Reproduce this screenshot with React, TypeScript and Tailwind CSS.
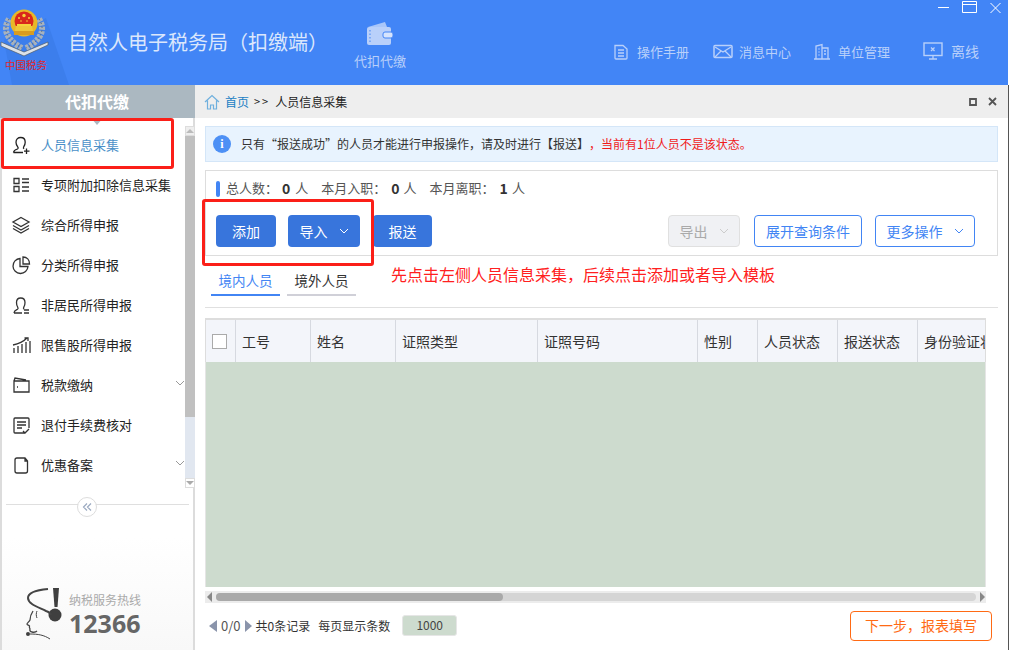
import React from "react";

const Stroke = ({ s = 20, children, vb = "0 0 20 20", c = "" }: { s?: number; children: React.ReactNode; vb?: string; c?: string }) => (
  <svg width={s} height={s} viewBox={vb} fill="none" stroke="currentColor" strokeWidth="1.300" className={c}>{children}</svg>
);

const Chevron = ({ c = "" }: { c?: string }) => (
  <svg width="10" height="6" viewBox="0 0 10 6" fill="none" stroke="currentColor" strokeWidth="1" className={c}><path d="M1 1l4 4 4-4" /></svg>
);

const menu: { t: string; i: React.ReactNode; arrow?: boolean; active?: boolean }[] = [
  { t: "人员信息采集", active: true, i: <Stroke><path d="M2.500 17.500c0-2 1.800-2.700 4-3.500.8-.5.8-1.300.2-2.100C5.800 10.700 5 9 5 7.200 5 4.200 7 2.500 9.700 2.500s4.500 1.700 4.500 4.700c0 1.700-.6 3.300-1.500 4.600-.5.800-.4 1.500.4 2M2.500 17.500h9.500M15.500 13.500v5.500M13 16.200h5.500" /></Stroke> },
  { t: "专项附加扣除信息采集", i: <Stroke><path d="M3 3.500h5v5H3zM3 11.500h5v5H3zM11 4h7M11 7.500h7M11 12h7M11 16h7" /></Stroke> },
  { t: "综合所得申报", i: <Stroke><path d="M10 2.500l8 4.500-8 4.500L2 7zM2 10.500l8 4.500 8-4.500M2 13.500l8 4.500 8-4.500" /></Stroke> },
  { t: "分类所得申报", i: <Stroke><path d="M9 3.500a7.500 7.500 0 1 0 8 8H9zM12 2v7h6.500C18.500 5 16 2 12 2z" /></Stroke> },
  { t: "非居民所得申报", i: <Stroke><path d="M3 18c0-2.500 2-3 3.500-3.800.8-.5.7-1.200.2-2C5.800 11 5.500 9.500 5.500 7.500 5.500 4.500 7.300 3 9.700 3s4.300 1.500 4.300 4.500c0 2-.4 3.500-1.200 4.700-.5.800-.5 1.400.2 2M3 18h8M13 15h5M13 18h5" /></Stroke> },
  { t: "限售股所得申报", i: <Stroke><path d="M3 18v-5M7 18v-7M11 18V9M15 18V7M19 18V6M2 10c5-1 10-3 14-7M13.500 3H17v3" /></Stroke> },
  { t: "税款缴纳", arrow: true, i: <Stroke><path d="M3 6h15v11H3zM3 6l1-3 11 2" /><path d="M6 12h1" /></Stroke> },
  { t: "退付手续费核对", i: <Stroke><path d="M14 18H4a1 1 0 0 1-1-1V4a1 1 0 0 1 1-1h13a1 1 0 0 1 1 1v9M6 7h9M6 10h9M6 13h5M12 16l2 2 4-4" /></Stroke> },
  { t: "优惠备案", arrow: true, i: <Stroke><path d="M6 3h8l2.500 3v10a2 2 0 0 1-2 2H6a2 2 0 0 1-2-2V5a2 2 0 0 1 2-2zM14 3v3h2.500" /></Stroke> },
];

const columns: [string, string][] = [
  ["工号", "w-[75px]"],
  ["姓名", "w-[85px]"],
  ["证照类型", "w-[142px]"],
  ["证照号码", "w-[160px]"],
  ["性别", "w-[60px]"],
  ["人员状态", "w-[80px]"],
  ["报送状态", "w-[80px]"],
  ["身份验证状态", "w-[70px]"],
];

function Emblem() {
  return (
    <svg width="52" height="58" viewBox="0 0 52 58" className="block">
      <path d="M9 18C3 27 5 38 22 47" fill="none" stroke="#a7b2bd" strokeWidth="6" strokeDasharray="3 1.200" />
      <path d="M39 18C45 27 43 38 26 47" fill="none" stroke="#a7b2bd" strokeWidth="6" strokeDasharray="3 1.200" />
      <path d="M9 18C3 27 5 38 22 47M39 18C45 27 43 38 26 47" fill="none" stroke="#5d6a78" strokeWidth="1" strokeDasharray="1.500 2.500" />
      <path d="M1 41l23 10 24-10v3L24 55 1 45z" fill="#dde2e8" stroke="#4f5b68" strokeWidth=".7" />
      <circle cx="24" cy="22" r="13.500" fill="#e8b728" />
      <circle cx="24" cy="20" r="9.500" fill="#d9261c" />
      <path d="M14 30h20v4H14z" fill="#d99c20" />
      <path d="M16 25h16l1 5H15z" fill="#f0c63a" />
      <circle cx="24" cy="14.500" r="1.700" fill="#f5d23c" />
      <circle cx="19" cy="17" r="1" fill="#f5d23c" />
      <circle cx="29" cy="17" r="1" fill="#f5d23c" />
      <circle cx="21" cy="20" r=".8" fill="#f5d23c" />
      <circle cx="27" cy="20" r=".8" fill="#f5d23c" />
      <path d="M17 23h14v2H17z" fill="#f5d23c" />
    </svg>
  );
}

function Hotline() {
  return (
    <svg width="42" height="54" viewBox="0 0 42 54" className="block shrink-0">
      <path d="M29 1h6l-1.500 19h-3z" fill="#3f3f3f" />
      <circle cx="31" cy="28" r="6.500" fill="#3f3f3f" />
      <path d="M24 2C13 3 4 6 4 11c0 6 10 9 18 13 3 1 5 3 5 4" fill="none" stroke="#444" strokeWidth="2" />
      <path d="M9 24c-2 3-3 6-3 9-1 2-3 3-3 4 0 1 2 1 2.500 2-.5 1 0 2 .5 3-.5 1 0 3 2 3 2 .5 4 0 5-1" fill="none" stroke="#444" strokeWidth="1.300" />
      <path d="M13 24c-1 2-1 5 0 7" fill="none" stroke="#444" strokeWidth="1" />
      <circle cx="4" cy="47" r="2" fill="#3f3f3f" />
      <path d="M6 47c8 0 14 1 20 5" fill="none" stroke="#444" strokeWidth="1" />
    </svg>
  );
}

const Btn = ({ w, children }: { w: string; children: React.ReactNode }) => (
  <button className={`${w} h-[32px] rounded-[4px] bg-[#3875dc] text-white text-[14px] flex items-center justify-center`}>{children}</button>
);

export default function App() {
  return (
    <div className="relative w-[1009px] h-[650px] overflow-hidden bg-white flex flex-col font-['Noto_Sans_CJK_SC','Microsoft_YaHei',sans-serif] text-[#333]">
      <header className="relative h-[85px] w-[1008px] shrink-0 bg-[#4285f6] flex overflow-hidden">
        <svg width="80" height="85" viewBox="0 0 80 85" className="absolute left-0 top-0">
          <path d="M46 18L69 85H12L4 40z" fill="#3c7eec" />
        </svg>
        <div className="relative w-[68px] shrink-0 pt-[1px] flex flex-col">
          <Emblem />
          <span className="text-[#e2262a] text-[10.500px] leading-none pl-[5px] mt-[1px] whitespace-nowrap">中国税务</span>
        </div>
        <h1 className="relative w-[286px] shrink-0 pt-[28px] text-[20px] leading-[28px] text-[#dbe7fc] whitespace-nowrap">自然人电子税务局（扣缴端）</h1>
        <div className="w-[52px] shrink-0 flex flex-col items-center pt-[21px] text-[#b9d0fa]">
          <svg width="28" height="26" viewBox="0 0 28 26">
            <path d="M2 6l17-5 2 5z" fill="#a9c6f9" />
            <path d="M1 8a2 2 0 0 1 2-2h20a2 2 0 0 1 2 2v14a2 2 0 0 1-2 2H3a2 2 0 0 1-2-2z" fill="#b9d0fa" />
            <rect x="17" y="11" width="10" height="6" rx="2" fill="#d6e4fd" stroke="#4285f6" />
            <path d="M4 9v13" stroke="#4285f6" strokeWidth="1" strokeDasharray="1.500 2" />
          </svg>
          <span className="text-[13px] leading-[18px] mt-[5px] whitespace-nowrap">代扣代缴</span>
        </div>
        <div className="w-[207px] shrink-0" />
        <div className="flex pt-[42px] text-[13px] leading-[18px] text-[#b9d0fa] whitespace-nowrap h-fit">
          <div className="flex items-center w-[100px]">
            <Stroke s={16} vb="0 0 16 16"><path d="M2 1.500h8l4 3.500v9a1 1 0 0 1-1 1H3a1 1 0 0 1-1-1zM5 6h6M5 9h6M5 12h6" /></Stroke>
            <span className="ml-[8px]">操作手册</span>
          </div>
          <div className="flex items-center w-[100px]">
            <Stroke s={20} vb="0 0 20 16"><rect x="1" y="1.500" width="18" height="12" rx="1" strokeWidth="1.500" /><path d="M2 3l8 5 8-5M2 13l6-6M18 13l-6-6" /></Stroke>
            <span className="ml-[6px]">消息中心</span>
          </div>
          <div className="flex items-center w-[110px]">
            <Stroke s={18} vb="0 0 18 16"><path d="M3 15V2l6-1.500V15M9 4h6v11M1 15h16M5.500 5h1M5.500 8h1M5.500 11h1M11 7h2M11 10h2" /></Stroke>
            <span className="ml-[7px]">单位管理</span>
          </div>
          <div className="flex items-center -mt-[3px]">
            <Stroke s={20} vb="0 0 20 18"><rect x="1" y="1" width="18" height="12.500" strokeWidth="1.400" /><path d="M8 5.500l3.500 3.500M11.500 5.500L8 9M10 13.500v3M6 17h8" /></Stroke>
            <span className="ml-[8px] text-[14px]">离线</span>
          </div>
        </div>
        <div className="absolute right-[7px] top-[1px] flex text-white">
          <svg width="11" height="12" viewBox="0 0 11 12" className="mr-[13px]" stroke="currentColor"><path d="M0 6.500h11" /></svg>
          <svg width="15" height="12" viewBox="0 0 15 12" className="mr-[13px]" fill="none" stroke="currentColor"><path d="M.5.500h14v11H.5zM.5 3.500h14" /></svg>
          <svg width="11" height="12" viewBox="0 0 11 12" stroke="currentColor"><path d="M.5 2l10 10M10.500 2L.5 12" /></svg>
        </div>
      </header>

      <div className="flex flex-1 min-h-0">
        <aside className="relative w-[195px] shrink-0 flex flex-col border-l-2 border-r-2 border-[#dcdcdc] bg-gradient-to-b from-white from-80% to-[#f8f8f8]">
          <div className="-ml-[2px] -mr-[2px] h-[33px] shrink-0 bg-[#abb8c1] flex items-center justify-center text-white text-[16px] font-bold pr-[1px] pb-[2px]">代扣代缴</div>
          <div className="absolute left-[89px] top-[33px] w-0 h-0 border-l-[6px] border-r-[6px] border-t-[7px] border-l-transparent border-r-transparent border-t-[#abb8c1]" />
          <div className="flex h-[370px] shrink-0">
            <nav className="flex-1 pt-[7px]">
              {menu.map((m) => (
                <div key={m.t} className="relative h-[40px] flex items-center pl-[9px] text-[13px] whitespace-nowrap text-[#222]">
                  <span className={m.active ? "text-[#222] w-[30px]" : "text-[#333] w-[30px]"}>{m.i}</span>
                  <span className={m.active ? "text-[#4a90c8]" : ""}>{m.t}</span>
                  {m.arrow && <Chevron c="absolute right-[0px] top-[15px] text-[#999]" />}
                </div>
              ))}
            </nav>
            <div className="w-[10px] -mr-[2px] pt-[8px] flex flex-col">
              <div className="h-[10px] bg-[#eee] border border-[#ddd] flex items-center justify-center">
                <div className="w-0 h-0 border-l-[4px] border-r-[4px] border-b-[4px] border-l-transparent border-r-transparent border-b-[#bbb]" />
              </div>
              <div className="h-[281px] bg-[#c0c0c0]" />
              <div className="flex-1 bg-[#e1e7f0]" />
              <div className="h-[10px] bg-white border border-[#ddd] flex items-center justify-center">
                <div className="w-0 h-0 border-l-[4px] border-r-[4px] border-t-[4px] border-l-transparent border-r-transparent border-t-[#aaa]" />
              </div>
            </div>
          </div>
          <div className="relative mt-[16px] mx-[4px] h-[1px] bg-[#dfdfdf]">
            <div className="absolute left-[71px] -top-[7px] w-[20px] h-[20px] rounded-full bg-white border border-[#ddd] flex items-center justify-center">
              <svg width="10" height="8" viewBox="0 0 10 8" fill="none" stroke="#9aa9c0" strokeWidth="1.200"><path d="M5 .5L1.500 4 5 7.500M9 .5L5.500 4 9 7.500" /></svg>
            </div>
          </div>
          <div className="mt-auto mb-[9px] ml-[22px] flex items-center">
            <Hotline />
            <div className="ml-[3px] flex flex-col">
              <span className="text-[12px] leading-[18px] text-[#aaa] whitespace-nowrap">纳税服务热线</span>
              <span className="text-[25px] leading-[28px] font-bold text-[#666] font-['Open_Sans',sans-serif]">12366</span>
            </div>
          </div>
        </aside>

        <main className="flex-1 min-w-0 flex flex-col border-r border-[#555]">
          <div className="h-[33px] shrink-0 bg-[#eeeeee] flex items-center pl-[9px] pr-[11px] text-[12px] whitespace-nowrap">
            <svg width="16" height="16" viewBox="0 0 16 16" fill="none" stroke="#6fb0de" strokeWidth="1.200"><path d="M1 8l7-6.500L15 8M3.500 6.500V15h3v-4h3v4h3V6.500" /></svg>
            <span className="ml-[5px] text-[#1b7fc4]">首页</span>
            <span className="ml-[5px] text-[#222] text-[11px] tracking-[2px]">&gt;&gt;</span>
            <span className="ml-[5px] text-[#222]">人员信息采集</span>
            <svg width="8" height="8" viewBox="0 0 8 8" className="ml-auto" fill="none" stroke="#555" strokeWidth="1.800"><path d="M1 1h6v6H1z" /></svg>
            <svg width="9" height="9" viewBox="0 0 9 9" className="ml-[11px]" fill="none" stroke="#555" strokeWidth="1.800"><path d="M1 1l7 7M8 1L1 8" /></svg>
          </div>

          <div className="mt-[8px] ml-[10px] w-[793px] h-[36px] bg-[#e8f3fe] border border-[#d4e6f8] flex items-center pl-[7px] text-[12px] text-[#333] whitespace-nowrap">
            <span className="w-[18px] h-[18px] rounded-full bg-[#4d90f5] text-white flex items-center justify-center text-[12px] font-bold font-['Liberation_Serif',serif]">i</span>
            <span className="ml-[10px]">只有“报送成功”的人员才能进行申报操作，请及时进行【报送】</span>
            <span className="text-[#f01c1c]">，当前有1位人员不是该状态。</span>
          </div>

          <section className="mt-[8px] ml-[10px] w-[793px] h-[86px] border border-[#dddddd] pl-[10px] flex flex-col">
            <div className="h-[34px] flex items-center text-[13px] text-[#555] whitespace-nowrap">
              <span className="w-[4px] h-[16px] rounded-[2px] bg-[#4285f4] mr-[6px] mt-[1px]" />
              <span>总人数：</span><b className="text-[#333] text-[14px] ml-[4px]">0</b><span className="ml-[5px]">人</span>
              <span className="ml-[13px]">本月入职：</span><b className="text-[#333] text-[14px] ml-[5px]">0</b><span className="ml-[4px]">人</span>
              <span className="ml-[13px]">本月离职：</span><b className="text-[#333] text-[14px] ml-[5px]">1</b><span className="ml-[4px]">人</span>
            </div>
            <div className="mt-[10px] flex items-center whitespace-nowrap">
              <Btn w="w-[60px]">添加</Btn>
              <div className="w-[12px]" />
              <Btn w="w-[72px]"><span>导入</span><Chevron c="ml-[11px] text-white" /></Btn>
              <div className="w-[13px]" />
              <Btn w="w-[59px]">报送</Btn>
              <button className="ml-[236px] w-[72px] h-[32px] rounded-[4px] bg-[#f0f1f4] border border-[#e0e0e0] text-[#aaa] text-[14px] flex items-center justify-center"><span>导出</span><Chevron c="ml-[11px] text-[#ccc]" /></button>
              <button className="ml-[14px] w-[108px] h-[32px] rounded-[4px] border border-[#4285f4] text-[#4285f4] text-[14px]">展开查询条件</button>
              <button className="ml-[13px] w-[100px] h-[32px] rounded-[4px] border border-[#4285f4] text-[#4285f4] text-[14px] flex items-center justify-center"><span>更多操作</span><Chevron c="ml-[11px]" /></button>
            </div>
          </section>

          <div className="ml-[16px] mt-[10px] h-[30px] flex whitespace-nowrap text-[13.500px]">
            <div className="w-[69px] h-[30px] border-b-2 border-[#4285f4] text-[#4285f4] text-center leading-[18px] pt-[5px]">境内人员</div>
            <div className="ml-[7px] w-[69px] h-[30px] border-b-2 border-[#d0d0d8] text-center leading-[18px] pt-[5px] text-[#333]">境外人员</div>
            <div className="ml-[35px] -mt-[2px] text-[16px] leading-[20px] text-[#ff2020]">先点击左侧人员信息采集，后续点击添加或者导入模板</div>
          </div>

          <div className="mt-[11px] ml-[10px] w-[793px] h-[1px] shrink-0 bg-[#e0e0e0]" />

          <div className="mt-[10px] ml-[10px] w-[781px] h-[285px] flex flex-col shrink-0">
            <div className="h-[44px] shrink-0 flex bg-[#f3f5fa] border-t-2 border-l border-r border-[#dddddd] overflow-hidden text-[14px] text-[#333] whitespace-nowrap">
              <div className="w-[30px] shrink-0 border-r border-[#d6d9e0] flex items-center pl-[6px]">
                <span className="w-[15px] h-[15px] bg-white border border-[#aaa]" />
              </div>
              {columns.map(([t, w]) => (
                <div key={t} className={`${w} shrink-0 border-r border-[#d6d9e0] flex items-center pl-[6px] overflow-hidden last:border-r-0`}>{t}</div>
              ))}
            </div>
            <div className="flex-1 bg-[#cddbce] border-l border-r border-[#e5e5e5]" />
            <div className="h-[4px] shrink-0 bg-white" />
            <div className="h-[12px] shrink-0 bg-[#ececec] flex items-center px-[1px]">
              <div className="w-0 h-0 border-t-[5px] border-b-[5px] border-r-[5px] border-t-transparent border-b-transparent border-r-[#888] ml-[1px]" />
              <div className="ml-[4px] flex-1 h-[8px] rounded-[4px] bg-[#d5d5d5] flex">
                <div className="w-[287px] h-[8px] rounded-[4px] bg-[#a9a9a9]" />
              </div>
              <div className="ml-[4px] w-0 h-0 border-t-[5px] border-b-[5px] border-l-[5px] border-t-transparent border-b-transparent border-l-[#888]" />
            </div>
          </div>

          <div className="flex-1 flex items-center pl-[14px] pr-[16px] pb-[2px] text-[12px] text-[#333] whitespace-nowrap">
            <div className="w-0 h-0 border-t-[6px] border-b-[6px] border-r-[8px] border-t-transparent border-b-transparent border-r-[#8a94ab]" />
            <span className="ml-[4px] text-[13px] text-[#555]">0/0</span>
            <div className="ml-[4px] w-0 h-0 border-t-[6px] border-b-[6px] border-l-[7px] border-t-transparent border-b-transparent border-l-[#8a94ab]" />
            <span className="ml-[4px]">共0条记录</span>
            <span className="ml-[8px]">每页显示条数</span>
            <span className="ml-[12px] w-[55px] h-[21px] -mt-[1px] rounded-[3px] bg-[#cddbce] border border-[#e6e6e6] flex items-center justify-center text-[#444]">1000</span>
            <button className="ml-auto w-[142px] h-[30px] rounded-[4px] border border-[#ff6a14] text-[#ff6a14] text-[14px]">下一步，报表填写</button>
          </div>
        </main>
      </div>

      <div className="absolute left-[1px] top-[118px] w-[173px] h-[51px] border-[3px] border-[#fb1f18] rounded-[3px]" />
      <div className="absolute left-[202px] top-[199px] w-[172px] h-[67px] border-[3px] border-[#fb1f18] rounded-[3px]" />
    </div>
  );
}
